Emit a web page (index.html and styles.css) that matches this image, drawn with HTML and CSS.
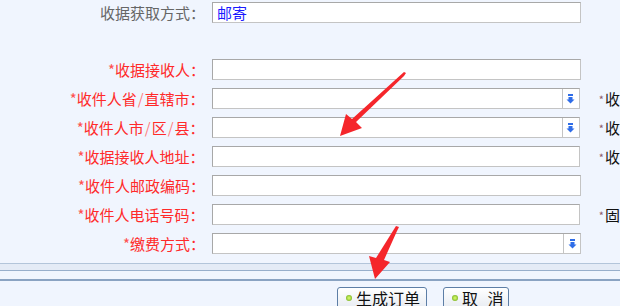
FILE: index.html
```html
<!DOCTYPE html>
<html lang="zh-CN">
<head>
<meta charset="utf-8">
<title>收据</title>
<link rel="stylesheet" href="styles.css">
</head>
<body>
<div class="page">
  <div class="form">
    <div class="row row-first">
      <div class="label label-grey">收据获取方式：</div>
      <div class="field"><span class="value">邮寄</span></div>
      <div class="note"></div>
    </div>
    <div class="row">
      <div class="label"><span class="star">*</span>收据接收人：</div>
      <div class="field"></div>
      <div class="note"></div>
    </div>
    <div class="row">
      <div class="label"><span class="star">*</span>收件人省<span class="sl">/</span>直辖市：</div>
      <div class="field select"><span class="sel-btn"><svg width="9" height="10" viewBox="0 0 9 10"><rect x="2" y="0" width="5" height="2" fill="#2f6de8"/><path d="M2.5 3h4v2.5h2L4.5 9.5 0.5 5.5h2z" fill="#2f6de8"/></svg></span></div>
      <div class="note"><span class="ic">*</span>收</div>
    </div>
    <div class="row">
      <div class="label"><span class="star">*</span>收件人市<span class="sl">/</span>区<span class="sl">/</span>县：</div>
      <div class="field select"><span class="sel-btn"><svg width="9" height="10" viewBox="0 0 9 10"><rect x="2" y="0" width="5" height="2" fill="#2f6de8"/><path d="M2.5 3h4v2.5h2L4.5 9.5 0.5 5.5h2z" fill="#2f6de8"/></svg></span></div>
      <div class="note"><span class="ic">*</span>收</div>
    </div>
    <div class="row">
      <div class="label"><span class="star">*</span>收据接收人地址：</div>
      <div class="field"></div>
      <div class="note"><span class="ic">*</span>收</div>
    </div>
    <div class="row">
      <div class="label"><span class="star">*</span>收件人邮政编码：</div>
      <div class="field"></div>
      <div class="note"></div>
    </div>
    <div class="row">
      <div class="label"><span class="star">*</span>收件人电话号码：</div>
      <div class="field"></div>
      <div class="note"><span class="ic">*</span>固</div>
    </div>
    <div class="row">
      <div class="label"><span class="star">*</span>缴费方式：</div>
      <div class="field select"><span class="sel-btn"><svg width="9" height="10" viewBox="0 0 9 10"><rect x="2" y="0" width="5" height="2" fill="#2f6de8"/><path d="M2.5 3h4v2.5h2L4.5 9.5 0.5 5.5h2z" fill="#2f6de8"/></svg></span></div>
      <div class="note"></div>
    </div>
  </div>
  <div class="sep">
    <div class="sep-band"></div>
    <div class="sep-line"></div>
  </div>
  <div class="buttons">
    <button class="btn btn-wide"><span class="dot"></span>生成订单</button>
    <button class="btn btn-cancel"><span class="dot"></span>取 消</button>
  </div>
  <svg class="arrows" width="620" height="306" viewBox="0 0 620 306">
    <path d="M406 73 L404 76 L356 122 L362 128 L340 136 L346 114 L352 119 L404 72 Z" fill="#f5262b"/>
    <path d="M399 227 L397 231 L384 260 L390 262 L375 279 L369 256 L376 258 L396 226 Z" fill="#f5262b"/>
  </svg>
</div>
</body>
</html>
```
FILE: styles.css
```css
html, body {
  margin: 0;
  padding: 0;
}
body {
  background: #f0f5fe;
  font-family: "Noto Sans CJK SC", "Noto Sans", sans-serif;
  font-size: 15px;
  color: #000;
}
.page {
  position: relative;
  width: 620px;
  height: 306px;
  overflow: hidden;
}
.form {
  padding-top: 2px;
  display: flex;
  flex-direction: column;
  gap: 8px;
}
.row {
  display: flex;
  align-items: center;
  height: 21px;
}
.row-first {
  margin-bottom: 28px;
}
.label {
  width: 205px;
  text-align: right;
  color: #ff2a2a;
  white-space: nowrap;
  line-height: 21px;
}
.label-grey {
  color: #666;
}
.star {
  color: #ff5050;
  font-size: 15px;
}
.sl {
  color: #ff8080;
  padding: 0 1px;
}
.field {
  margin-left: 7px;
  width: 367px;
  height: 19px;
  border: 1px solid #a8a8a8;
  border-bottom-color: #c4c4c4;
  border-right-color: #c4c4c4;
  background: #fff;
  display: flex;
  align-items: center;
  box-sizing: content-box;
}
.value {
  color: #1a1aff;
  padding-left: 4px;
  font-size: 15px;
  line-height: 19px;
}
.select {
  justify-content: flex-end;
}
.sel-btn {
  width: 16px;
  height: 19px;
  border-left: 1px solid #c4c4c4;
  display: flex;
  align-items: center;
  justify-content: center;
}
.note {
  margin-left: 19px;
  display: flex;
  align-items: center;
  white-space: nowrap;
  font-size: 15px;
  color: #111;
}
.ic {
  font-size: 11px;
  color: #8a5a6a;
  margin-right: 1px;
}
.sep {
  margin-top: 9px;
  border-top: 1px solid #b3c5da;
}
.sep-band {
  height: 6px;
  background: #e4ebf6;
  border-bottom: 1px solid #97aecb;
}
.sep-line {
  margin-top: 8px;
  height: 2px;
  background: #8aa3c2;
}
.buttons {
  display: flex;
  padding-left: 337px;
  gap: 16px;
  margin-top: 6px;
}
.btn {
  height: 22px;
  width: 66px;
  border: 1px solid #5d7ea6;
  border-radius: 3px;
  background: linear-gradient(#ffffff, #e8ecf2);
  font-family: "Noto Sans CJK SC", "Noto Sans", sans-serif;
  font-size: 16px;
  color: #111;
  display: flex;
  align-items: center;
  padding: 0 0 0 8px;
  line-height: 20px;
  gap: 4px;
}
.btn-wide {
  width: 90px;
}
.btn-cancel {
  word-spacing: 6px;
}
.dot {
  width: 6px;
  height: 6px;
  border-radius: 50%;
  background: radial-gradient(circle, #c8f060 20%, #78b020 80%);
  flex: none;
}
.arrows {
  position: absolute;
  left: 0;
  top: 0;
  pointer-events: none;
}
```
